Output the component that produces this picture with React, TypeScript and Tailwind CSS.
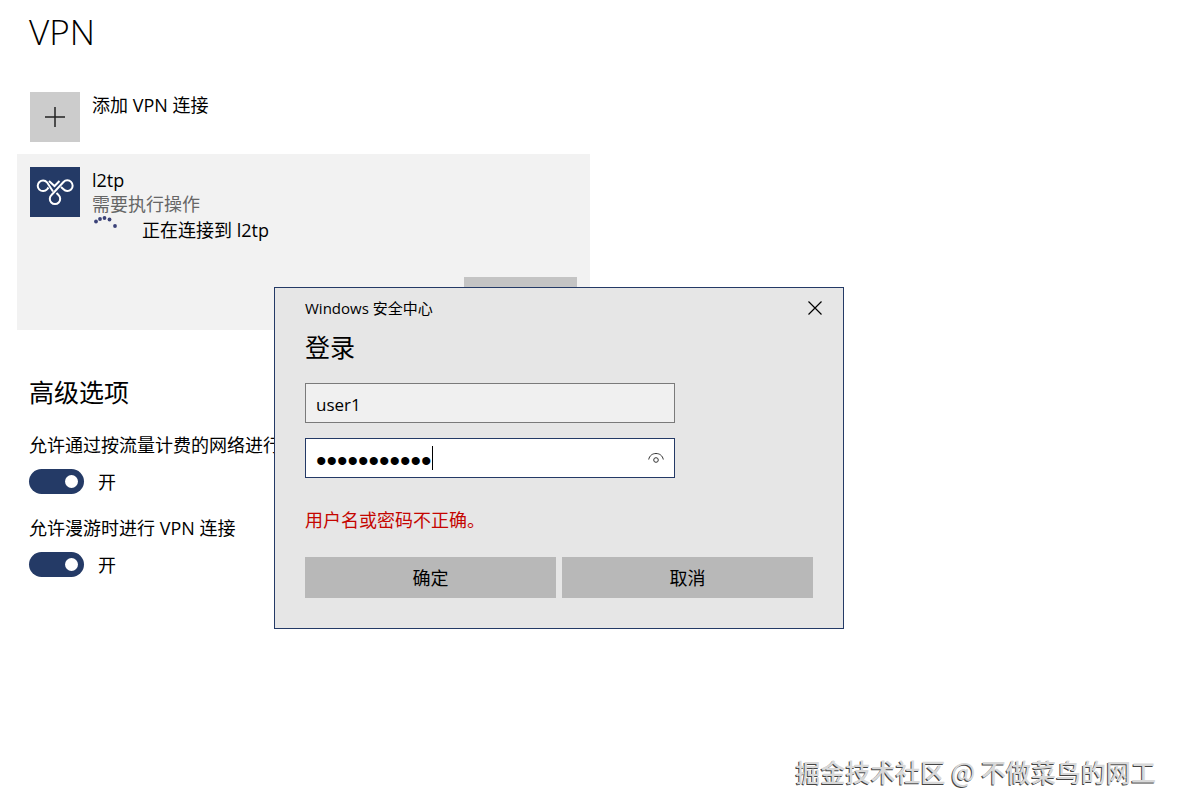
import { FC, useState } from "react";

const toggles = [
  { id: "metered", label: "允许通过按流量计费的网络进行" },
  { id: "roaming", label: "允许漫游时进行 VPN 连接" },
];

const VpnIcon: FC = () => (
  <svg viewBox="0 0 50 50" className="h-[50px] w-[50px] shrink-0 bg-[#243a66]" fill="none" stroke="#fff" strokeWidth="2" aria-hidden="true">
    <path d="M23 24.500 L17 15.300 A5.300 5.300 0 1 0 17 22.300 L18.500 20.500" />
    <path d="M19 14 L24.500 19 L29.500 14" />
    <path d="M31 20 L33.500 22.300 A5.300 5.300 0 1 0 33.500 15 L21.500 28 A5.200 5.200 0 1 0 28.500 28 L26.500 26" />
  </svg>
);

const Spinner: FC = () => (
  <svg viewBox="0 2 26 26" className="h-[26px] w-[26px]" fill="#3b4278" aria-hidden="true">
    <circle cx="4" cy="7.500" r="1.900" />
    <circle cx="8" cy="5" r="1.900" />
    <circle cx="12.500" cy="4" r="1.900" />
    <circle cx="17.500" cy="5.500" r="1.900" />
    <circle cx="23" cy="12" r="1.900" />
  </svg>
);

const Toggle: FC<{ id: string; label: string }> = ({ id, label }) => {
  const [on, setOn] = useState(true);

  return (
    <div>
      <label htmlFor={id} className="block whitespace-nowrap">
        {label}
      </label>
      <div className="mt-3 flex h-[25px] items-center gap-[14px]">
        <input
          id={id}
          type="checkbox"
          role="switch"
          checked={on}
          onChange={() => setOn(!on)}
          className="flex h-[25px] w-[55px] appearance-none items-center justify-start rounded-full bg-gray-500 px-[6px] before:h-[13px] before:w-[13px] before:rounded-full before:bg-white checked:justify-end checked:bg-[#243a66]"
        />
        <span>{on ? "开" : "关"}</span>
      </div>
    </div>
  );
};

const LoginDialog: FC = () => {
  const [user, setUser] = useState("user1");
  const [password, setPassword] = useState("password123");
  const [reveal, setReveal] = useState(false);

  return (
    <form
      role="dialog"
      aria-labelledby="login-title"
      onSubmit={(e) => e.preventDefault()}
      className="absolute left-[274px] top-[287px] w-[570px] border border-[#243a66] bg-[#e6e6e6] px-[30px] pb-[30px]"
    >
      <div className="flex h-[39px] items-center justify-between text-[15px]">
        <span>Windows 安全中心</span>
        <button type="button" aria-label="关闭" className="-mr-4 p-[7px]">
          <svg viewBox="0 0 14 14" className="h-[14px] w-[14px]" stroke="#000" strokeWidth="1.2" aria-hidden="true">
            <path d="M0.500 0.500 L13.500 13.500 M13.500 0.500 L0.500 13.500" />
          </svg>
        </button>
      </div>
      <h2 id="login-title" className="text-[25px] leading-10">
        登录
      </h2>

      <input
        aria-label="用户名"
        value={user}
        onChange={(e) => setUser(e.target.value)}
        className="mt-4 block h-10 w-[370px] border border-[#7a7a7a] bg-[#f0f0f0] px-[10px] pt-[2px] text-[17px] outline-none"
      />
      <div className="mt-[15px] flex h-10 w-[370px] items-center border border-[#243a66] bg-white px-[10px]">
        <input
          aria-label="密码"
          type={reveal ? "text" : "password"}
          value={password}
          onChange={(e) => setPassword(e.target.value)}
          className="field-sizing-content pt-[6px] font-['Liberation_Sans'] text-[30px] leading-6 outline-none"
        />
        <span className="h-6 w-px bg-black" />
        <button type="button" aria-label="显示密码" onClick={() => setReveal(!reveal)} className="ml-auto">
          <svg viewBox="0 0 16 12" className="h-3 w-4" fill="none" stroke="#333" aria-hidden="true">
            <path d="M0.700 7.500 C1.500 3.500 4.500 1.500 8 1.500 S14.500 3.500 15.300 7.500" />
            <circle cx="8" cy="8" r="2.300" />
          </svg>
        </button>
      </div>

      <p className="mt-7 leading-7 text-[#c50500]">用户名或密码不正确。</p>
      <div className="mt-[23px] grid grid-cols-2 gap-[6px]">
        <button type="submit" className="h-[41px] bg-[#b8b8b8]">
          确定
        </button>
        <button type="button" className="h-[41px] bg-[#b8b8b8]">
          取消
        </button>
      </div>
    </form>
  );
};

export default function App() {
  return (
    <div className="relative min-h-screen bg-white font-['Open_Sans','Noto_Sans_CJK_SC',sans-serif] text-[18px] leading-6 text-black">
      <main className="max-w-[590px] pl-[17px]">
        <h1 className="px-3 pt-2 text-[35px] font-[350] leading-[48px]">VPN</h1>

        <button type="button" className="mt-9 flex items-start gap-3 px-[13px] text-left">
          <span className="flex h-[50px] w-[50px] items-center justify-center bg-[#ccc]">
            <svg viewBox="0 0 20 20" className="h-5 w-5" stroke="#222" strokeWidth="1.5" aria-hidden="true">
              <path d="M10 0 V20 M0 10 H20" />
            </svg>
          </span>
          <span className="pt-px">添加 VPN 连接</span>
        </button>

        <section className="mt-3 bg-[#f2f2f2] p-[13px]">
          <div className="flex h-[110px] items-start gap-3">
            <VpnIcon />
            <div className="pt-px">
              <div>l2tp</div>
              <div className="text-[#666]">需要执行操作</div>
              <div className="flex items-start gap-6">
                <Spinner />
                <span className="pt-[2px]">正在连接到 l2tp</span>
              </div>
            </div>
          </div>
          <div className="flex justify-end">
            <button type="button" aria-label="取消连接" className="h-10 w-[113px] bg-[#c4c4c4]" />
          </div>
        </section>

        <section className="px-3 pt-[46px]">
          <h2 className="text-[25px] leading-8">高级选项</h2>
          <div className="mt-[25px] flex flex-col gap-[22px]">
            {toggles.map((t) => (
              <Toggle key={t.id} {...t} />
            ))}
          </div>
        </section>
      </main>

      <LoginDialog />

      <footer className="absolute bottom-[23px] right-[22px] font-['Noto_Sans_CJK_SC',sans-serif] text-[25px] font-medium leading-8 text-[#d8d8d8] [text-shadow:-1px_1px_0_#444]">
        掘金技术社区 @ 不做菜鸟的网工
      </footer>
    </div>
  );
}
